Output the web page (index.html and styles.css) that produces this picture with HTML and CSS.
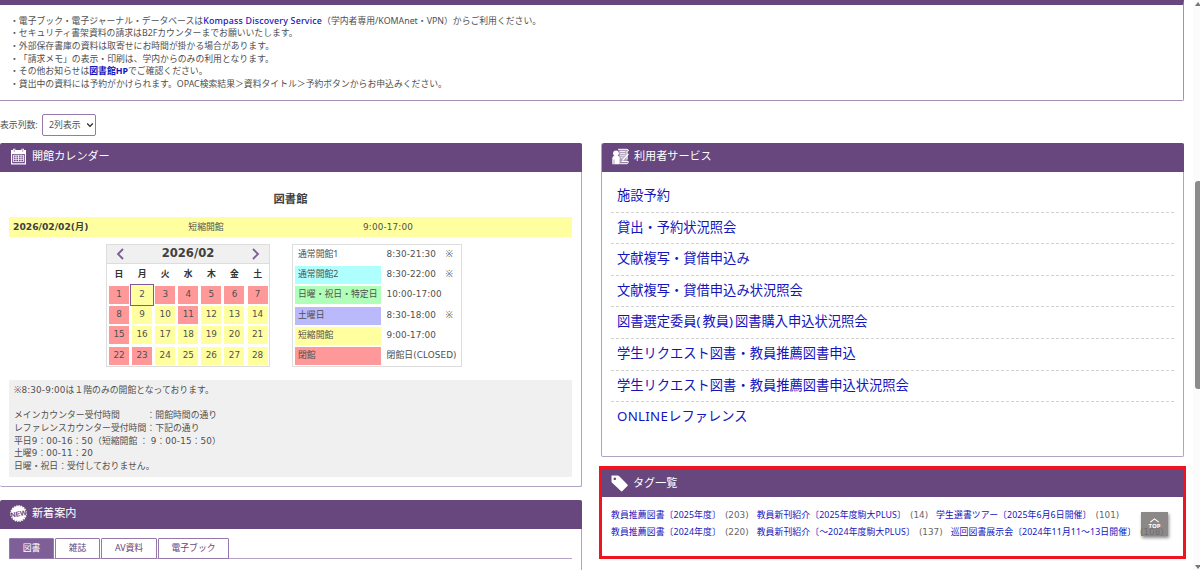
FILE: index.html
```html
<!DOCTYPE html>
<html lang="ja">
<head>
    <meta charset="UTF-8">
    <meta name="viewport" content="width=device-width, initial-scale=1.0">
    <title>図書館 OPAC</title>
    <link rel="stylesheet" href="styles.css">
</head>
<body>
    <section class="notice">
        <p>・電子ブック・電子ジャーナル・データベースは<a href="#" class="kompass">Kompass Discovery Service</a>（学内者専用/KOMAnet・VPN）からご利用ください。</p>
        <p>・セキュリティ書架資料の請求はB2Fカウンターまでお願いいたします。</p>
        <p>・外部保存書庫の資料は取寄せにお時間が掛かる場合があります。</p>
        <p>・<span class="bracket">「</span>請求メモ」の表示・印刷は、学内からのみの利用となります。</p>
        <p>・その他お知らせは<a href="#">図書館HP</a>でご確認ください。</p>
        <p>・貸出中の資料には予約がかけられます。OPAC検索結果＞資料タイトル＞予約ボタンからお申込みください。</p>
    </section>

    <div class="columns-select">
        <label for="cols">表示列数:</label>
        <div class="select-wrap">
            <select id="cols"><option>2列表示</option></select>
            <svg class="arrow" viewBox="0 0 8 6"><path d="M1.2 1.5 L4 4.3 L6.8 1.5" /></svg>
        </div>
    </div>

    <main class="main">
        <div class="col-left">
            <section class="panel calendar-panel">
                <h2 class="panel-title">
                    <svg class="icon" viewBox="0 0 17 17">
                        <path fill="#fff" fill-rule="evenodd" d="M1 2h2V.8h2.4V2h6V.8H14V2h2v14.5H1zM2.2 6v9.3h12.6V6z" />
                        <path stroke="#67477d" stroke-width=".6" fill="none" d="M4.2 1.3v2.4M12.7 1.3v2.4" />
                        <path stroke="#fff" stroke-width=".8" fill="none" d="M3.5 7.2h10M3.5 9.2h10M3.5 11.3h10M3.5 13.6h10M3.5 7v6.8M6 7v6.8M8.5 7v6.8M11 7v6.8M13.5 7v6.8" />
                    </svg>
                    開館カレンダー
                </h2>
                <h3 class="library-name">図書館</h3>
                <div class="today">
                    <span class="today-date">2026/02/02(月)</span>
                    <span class="today-type">短縮開館</span>
                    <span class="today-time">9:00-17:00</span>
                </div>
                <div class="calendar-row">
                    <div class="calendar">
                        <div class="month">
                            <svg viewBox="0 0 8 12"><path d="M7 1 L2 6 L7 11" /></svg>
                            <span>2026/02</span>
                            <svg viewBox="0 0 8 12"><path d="M1 1 L6 6 L1 11" /></svg>
                        </div>
                        <div class="week">
                            <span>日</span><span>月</span><span>火</span><span>水</span><span>木</span><span>金</span><span>土</span>
                        </div>
                        <div class="days">
                            <span class="closed">1</span><span class="current">2</span><span class="closed">3</span><span class="closed">4</span><span class="closed">5</span><span class="closed">6</span><span class="closed">7</span>
                            <span class="closed">8</span><span>9</span><span>10</span><span class="closed">11</span><span>12</span><span>13</span><span>14</span>
                            <span class="closed">15</span><span>16</span><span>17</span><span>18</span><span>19</span><span>20</span><span>21</span>
                            <span class="closed">22</span><span class="closed">23</span><span>24</span><span>25</span><span>26</span><span>27</span><span>28</span>
                        </div>
                    </div>
                    <div class="legend">
                        <span class="type">通常開館1</span><span class="num">8:30-21:30</span><span>※</span>
                        <span class="type cyan">通常開館2</span><span class="num">8:30-22:00</span><span>※</span>
                        <span class="type green">日曜・祝日・特定日</span><span class="num">10:00-17:00</span><span></span>
                        <span class="type blue">土曜日</span><span class="num">8:30-18:00</span><span>※</span>
                        <span class="type yellow">短縮開館</span><span class="num">9:00-17:00</span><span></span>
                        <span class="type red">閉館</span><span class="num">閉館日(CLOSED)</span><span></span>
                    </div>
                </div>
                <div class="memo">
                    <p>※<span class="wide">8:30-9:00</span>は１階のみの開館となっております。</p>
                    <p>&nbsp;</p>
                    <p><span class="counter">メインカウンター受付時間</span>：開館時間の通り</p>
                    <p><span class="counter">レファレンスカウンター受付時間</span>：下記の通り</p>
                    <p>平日<span class="wide">9</span>：<span class="wide">00-16</span>：<span class="wide">50</span>（短縮開館 ： <span class="wide">9</span>：<span class="wide">00-15</span>：<span class="wide">50</span>）</p>
                    <p>土曜<span class="wide">9</span>：<span class="wide">00-11</span>：<span class="wide">20</span></p>
                    <p>日曜・祝日：受付しておりません。</p>
                </div>
            </section>

            <section class="panel new-panel">
                <h2 class="panel-title">
                    <svg class="icon" viewBox="0 0 17 17">
                        <circle cx="8.5" cy="8.5" r="7.6" fill="#fff" />
                        <circle cx="8.5" cy="8.5" r="7.7" fill="none" stroke="#fff" stroke-width="1.3" stroke-dasharray="1.6 .8" />
                        <text x="8.5" y="11.2" transform="rotate(-10 8.5 8.5)" class="new-text">NEW</text>
                    </svg>
                    新着案内
                </h2>
                <div class="tabs">
                    <a class="tab active">図書</a>
                    <a class="tab">雑誌</a>
                    <a class="tab tab-av">AV資料</a>
                    <a class="tab tab-ebook">電子ブック</a>
                </div>
            </section>
        </div>

        <div class="col-right">
            <section class="panel service-panel">
                <h2 class="panel-title">
                    <svg class="icon" viewBox="0 0 17 17">
                        <path fill="#fff" fill-opacity=".45" d="M6.5 1.2h9v13.6h-8z" />
                        <path stroke="#fff" stroke-width="1" fill="none" d="M6 1.3h9.2q1.2 0 1.2 1.6H15v8.6M8 15.7h7.4q.9-.3.9-2.2H9.5" />
                        <path stroke="#fff" stroke-width=".9" fill="none" d="M7.8 3.6h5.6M8 5.7h5.6M8 7.8h5.6M8.6 9.9h3" />
                        <circle cx="4" cy="5.3" r="2.9" fill="#fff" />
                        <path fill="#fff" d="M.3 16.2V10q0-2 2.2-2.3h3q2.2 0 2.2 2v6.5z" />
                        <path stroke="#fff" stroke-width="1.3" d="M10.5 12.5l6-6.6" />
                        <path stroke="#67477d" stroke-width=".5" d="M2 11.5v4.7" />
                    </svg>
                    利用者サービス
                </h2>
                <ul class="services">
                    <li><a href="#">施設予約</a></li>
                    <li><a href="#">貸出・予約状況照会</a></li>
                    <li><a href="#">文献複写・貸借申込み</a></li>
                    <li><a href="#">文献複写・貸借申込み状況照会</a></li>
                    <li><a href="#">図書選定委員<span class="paren">(</span>教員<span class="paren">)</span>図書購入申込状況照会</a></li>
                    <li><a href="#">学生リクエスト図書・教員推薦図書申込</a></li>
                    <li><a href="#">学生リクエスト図書・教員推薦図書申込状況照会</a></li>
                    <li><a href="#"><span class="online">ONLINE</span>レファレンス</a></li>
                </ul>
            </section>

            <section class="tag-panel">
                <h2 class="panel-title">
                    <svg class="icon" viewBox="0 0 17 17">
                        <path fill="#fff" fill-rule="evenodd" d="M.5.5h6.2q.7 0 1.3.6l8.4 8.5q.7.8 0 1.5l-5 5q-.8.7-1.5 0L1.1 7.7Q.5 7.1.5 6.3zM3.8 2.5a1.3 1.3 0 1 0 .01 0z" />
                    </svg>
                    タグ一覧
                </h2>
                <div class="tags">
                    <p><a href="#">教員推薦図書〔2025年度〕</a><span>(203)</span><a href="#">教員新刊紹介〔2025年度駒大PLUS〕</a><span>(14)</span><a href="#">学生選書ツアー〔2025年6月6日開催〕</a><span>(101)</span></p>
                    <p><a href="#">教員推薦図書〔2024年度〕</a><span>(220)</span><a href="#">教員新刊紹介〔～2024年度駒大PLUS〕</a><span>(137)</span><a href="#">巡回図書展示会〔2024年11月11～13日開催〕</a><span>(108)</span></p>
                </div>
            </section>
        </div>
    </main>

    <a href="#" class="page-top">
        <svg viewBox="0 0 12 6"><path d="M1 5 L6 1 L11 5" /></svg>
        <span>TOP</span>
    </a>
    <div class="scrollbar">
        <div class="up"></div>
        <div class="thumb"></div>
        <div class="down"></div>
    </div>
</body>
</html>
```
FILE: styles.css
```css
* {
    box-sizing: border-box;
}
body {
    margin: 0;
    height: 570px;
    overflow: hidden;
    position: relative;
    background-color: #fff;
    color: #505050;
    font-family: "Noto Sans", "Noto Sans CJK JP", sans-serif;
    font-size: 8.83px;
    line-height: 12.65px;
}
h2, h3, p, ul {
    margin: 0;
    padding: 0;
}
p {
    height: 12.65px;
    white-space: nowrap;
}
a {
    color: #1414bd;
    text-decoration: none;
}

/* お知らせ */
.notice {
    width: 1184px;
    height: 101px;
    padding: 9.6px 0 0 10px;
    border-top: 5px solid #67477d;
    border-right: 1px solid #a58fb8;
    border-bottom: 1px solid #a58fb8;
    border-radius: 0 0 2px 0;
}
.notice a {
    font-weight: bold;
}
.notice .kompass {
    font-weight: 500;
    letter-spacing: 0.2px;
}
.bracket {
    text-spacing-trim: space-all;
}
.columns-select {
    display: flex;
    align-items: center;
    gap: 4px;
    height: 22px;
    margin-top: 13px;
}
.columns-select label {
    width: 38px;
    white-space: nowrap;
}
.select-wrap {
    position: relative;
    width: 54px;
    height: 22px;
}
.select-wrap select {
    width: 54px;
    height: 22px;
    padding: 0 0 0 6px;
    appearance: none;
    border: 1px solid #9479aa;
    border-radius: 2px;
    background-color: #fff;
    color: #505050;
    font: inherit;
}
.arrow {
    position: absolute;
    right: 2px;
    top: 8px;
    width: 8px;
    height: 6px;
    fill: none;
    stroke: #222;
    stroke-width: 1.2;
}

/* パネル */
.main {
    display: flex;
    gap: 19px;
    margin-top: 7px;
}
.col-left {
    width: 582px;
}
.col-right {
    width: 583px;
}
.panel {
    border: 1px solid #b3a2c3;
    border-top: none;
    border-radius: 2px;
}
.col-left .panel {
    border-left: none;
}
.panel-title {
    display: flex;
    align-items: center;
    gap: 5px;
    height: 29px;
    margin-right: -1px;
    padding: 0 0 2px 10px;
    border-radius: 2px 2px 0 0;
    background-color: #67477d;
    color: #fff;
    font-size: 11.1px;
    font-weight: normal;
}
.icon {
    width: 17px;
    height: 17px;
}
.new-text {
    fill: #67477d;
    font: bold 7px "Liberation Sans", sans-serif;
    text-anchor: middle;
}

/* カレンダー */
.calendar-panel {
    height: 344px;
}
.library-name {
    margin-top: 20px;
    line-height: 14px;
    color: #404040;
    font-size: 11.3px;
    text-align: center;
}
.today {
    display: grid;
    grid-template-columns: 103px 180px 1fr;
    align-items: center;
    width: 563px;
    height: 20px;
    margin: 11px 0 0 9px;
    padding-left: 4px;
    background-color: #ffffa0;
}
.today-date {
    color: #404040;
    font-family: "DejaVu Sans", "Noto Sans CJK JP", sans-serif;
    font-size: 9.2px;
    font-weight: bold;
}
.today-type {
    text-align: center;
}
.today-time {
    padding-left: 67px;
    font-family: "DejaVu Sans", sans-serif;
    letter-spacing: 0.15px;
}
.calendar-row {
    display: flex;
    gap: 22px;
    margin: 7px 0 0 106px;
}
.calendar {
    width: 164px;
    height: 123px;
    border: 1px solid #ddd;
}
.month {
    display: flex;
    align-items: center;
    justify-content: space-between;
    height: 19px;
    padding: 0 9px;
    background-color: #f0f0f0;
    border-bottom: 1px solid #ddd;
    color: #404040;
    font-family: "DejaVu Sans", sans-serif;
    font-size: 11.6px;
    font-weight: bold;
    line-height: 16px;
}
.month span {
    padding-bottom: 2px;
}
.month svg {
    width: 8px;
    height: 12px;
    fill: none;
    stroke: #7d5b98;
    stroke-width: 1.8;
}
.week, .days {
    display: grid;
    grid-template-columns: repeat(7, 20px);
    column-gap: 3.1px;
    padding-left: 2px;
    text-align: center;
}
.week {
    height: 22px;
    line-height: 21px;
    color: #333;
    font-weight: bold;
}
.days {
    grid-auto-rows: 18px;
    row-gap: 2.2px;
    font-family: "DejaVu Sans", sans-serif;
    line-height: 17px;
}
.days span {
    background-color: #ffffa0;
}
.days .closed {
    background-color: #ff9999;
}
.days .current {
    margin: -1px;
    outline: 1px solid #7d5b98;
    line-height: 19px;
}
.legend {
    display: grid;
    grid-template-columns: 86px 64.5px 14.5px;
    grid-auto-rows: 18px;
    row-gap: 2.2px;
    width: 170px;
    height: 123px;
    padding: 1px 2px;
    border: 1px solid #ddd;
    line-height: 17px;
    white-space: nowrap;
}
.type {
    padding-left: 3px;
}
.num {
    padding-left: 5.5px;
    font-family: "DejaVu Sans", "Noto Sans CJK JP", sans-serif;
    letter-spacing: 0.1px;
}
.cyan { background-color: #b0ffff; }
.green { background-color: #b0ffb8; }
.blue { background-color: #b9b9fb; }
.yellow { background-color: #ffffa0; }
.red { background-color: #ff9999; }
.memo {
    width: 563px;
    height: 97px;
    margin: 13px 0 0 9px;
    padding: 4px 5px;
    background-color: #f0f0f0;
}
.wide {
    font-family: "DejaVu Sans", sans-serif;
    letter-spacing: 0.15px;
}
.counter {
    display: inline-block;
    width: 132.5px;
}

/* 新着案内 */
.new-panel {
    height: 90px;
    margin-top: 13px;
}
.tabs {
    display: flex;
    gap: 1px;
    width: 563px;
    height: 21px;
    margin: 9px 0 0 9px;
    border-bottom: 1px solid #b3a2c3;
}
.tab {
    width: 45px;
    height: 21px;
    border: 1px solid #9479aa;
    border-radius: 1px 1px 0 0;
    color: #67477d;
    line-height: 19px;
    text-align: center;
}
.tab.active {
    background-color: #7f5f97;
    color: #fff;
}
.tab-av {
    width: 56px;
}
.tab-ebook {
    width: 71px;
}

/* 利用者サービス */
.service-panel {
    height: 314px;
}
.services {
    padding: 9px 9px 0;
    list-style: none;
}
.services li {
    height: 31.6px;
    padding-left: 6px;
    border-bottom: 1px dashed #d2d2d2;
    font-size: 13.28px;
    line-height: 29px;
}
.services li:last-child {
    border-bottom: none;
}
.paren {
    letter-spacing: 1.9px;
}
.online {
    letter-spacing: 0.3px;
}

/* タグ一覧 */
.tag-panel {
    width: 587px;
    height: 93px;
    margin: 9px 0 0 -2px;
    border: 3px solid #ee1420;
}
.tag-panel .panel-title {
    height: 28px;
    margin-right: 0;
    padding: 0 0 0 9px;
    border-radius: 0;
}
.tags {
    padding: 10px 0 0 9px;
}
.tags p {
    height: 16.5px;
    line-height: 16.5px;
}
.tags a {
    letter-spacing: 0.1px;
}
.tags span {
    margin: 0 8px 0 4px;
    color: #666;
    font-family: "DejaVu Sans", sans-serif;
}

.page-top {
    position: absolute;
    left: 1141px;
    top: 512px;
    display: flex;
    flex-direction: column;
    align-items: center;
    width: 27px;
    height: 24px;
    padding-top: 6px;
    background-color: rgba(115, 110, 110, 0.82);
    box-shadow: 1px 2px 3px rgba(0, 0, 0, 0.45);
    color: #fff;
    font-size: 6px;
    font-weight: bold;
    line-height: 7px;
}
.page-top svg {
    width: 11px;
    height: 5px;
    fill: none;
    stroke: #fff;
    stroke-width: 1.3;
}
.scrollbar {
    position: absolute;
    top: 0;
    right: 0;
    width: 7px;
    height: 570px;
    overflow: hidden;
    background-color: #fbfbfb;
}
.thumb {
    width: 8px;
    height: 208px;
    margin: 175px 0 0 2px;
    border-radius: 3px;
    background-color: #8b8b8b;
}
.up, .down {
    width: 0;
    margin-left: 2px;
    border: 3px solid transparent;
}
.up {
    height: 5px;
    border-top: 0;
    border-bottom: 4px solid #777;
    margin-top: 1px;
}
.down {
    margin-top: 176px;
    border-bottom: 0;
    border-top: 4px solid #777;
}
```
